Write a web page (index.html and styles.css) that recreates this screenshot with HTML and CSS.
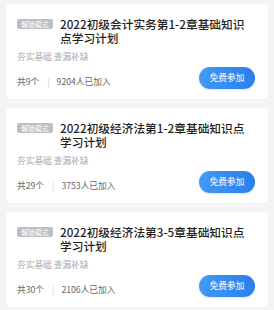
FILE: index.html
```html
<!DOCTYPE html>
<html lang="zh">
<head>
<meta charset="utf-8">
<link rel="stylesheet" href="styles.css">
</head>
<body>
<div class="list">
  <div class="card">
    <div class="head">
      <span class="badge">解锁模式</span>
      <div class="title">2022初级会计实务第1-2章基础知识点学习计划</div>
    </div>
    <div class="sub">夯实基础 查漏补缺</div>
    <div class="foot">
      <div class="meta"><span>共9个</span><span class="div">|</span><span>9204人已加入</span></div>
      <div class="btn">免费参加</div>
    </div>
  </div>
  <div class="card">
    <div class="head">
      <span class="badge">解锁模式</span>
      <div class="title">2022初级经济法第1-2章基础知识点学习计划</div>
    </div>
    <div class="sub">夯实基础 查漏补缺</div>
    <div class="foot">
      <div class="meta"><span>共29个</span><span class="div">|</span><span>3753人已加入</span></div>
      <div class="btn">免费参加</div>
    </div>
  </div>
  <div class="card">
    <div class="head">
      <span class="badge">解锁模式</span>
      <div class="title">2022初级经济法第3-5章基础知识点学习计划</div>
    </div>
    <div class="sub">夯实基础 查漏补缺</div>
    <div class="foot">
      <div class="meta"><span>共30个</span><span class="div">|</span><span>2106人已加入</span></div>
      <div class="btn">免费参加</div>
    </div>
  </div>
</div>
</body>
</html>
```

FILE: styles.css
```css
html, body {
  margin: 0;
  padding: 0;
  background: #f4f4f5;
  font-family: "Noto Sans CJK SC", "Noto Sans", sans-serif;
}
.list {
  padding: 4px 6px;
  display: flex;
  flex-direction: column;
  gap: 9px;
}
.card {
  background: #fff;
  border-radius: 4px;
  padding: 13px 13px 10px 11px;
  box-shadow: 0 0 3px rgba(0, 0, 0, 0.03);
}
.head {
  display: flex;
  align-items: flex-start;
}
.badge {
  flex: none;
  width: 36px;
  height: 10px;
  margin-top: 2px;
  margin-right: 7px;
  background: #bcc0c6;
  color: #fff;
  border-radius: 2px;
  font-size: 6.8px;
  line-height: 10px;
  text-align: center;
  overflow: hidden;
}
.title {
  max-width: 186px;
  font-size: 11.7px;
  line-height: 14px;
  font-weight: 500;
  color: #1f1f1f;
}
.sub {
  margin-top: 6px;
  font-size: 8.7px;
  line-height: 12px;
  color: #a8a8a8;
}
.foot {
  margin-top: 4px;
  display: flex;
  justify-content: space-between;
  align-items: flex-end;
}
.meta {
  font-size: 8.7px;
  line-height: 14px;
  color: #666;
  display: flex;
}
.div {
  margin: 0 7px 0 8px;
  color: #c8c8c8;
}
.btn {
  width: 56px;
  height: 22px;
  border-radius: 11px;
  background: linear-gradient(90deg, #4399f5, #2b7fea);
  color: #fff;
  font-size: 8.7px;
  line-height: 22px;
  text-align: center;
  box-shadow: 0 1px 2px rgba(43, 127, 234, 0.2);
}
```
